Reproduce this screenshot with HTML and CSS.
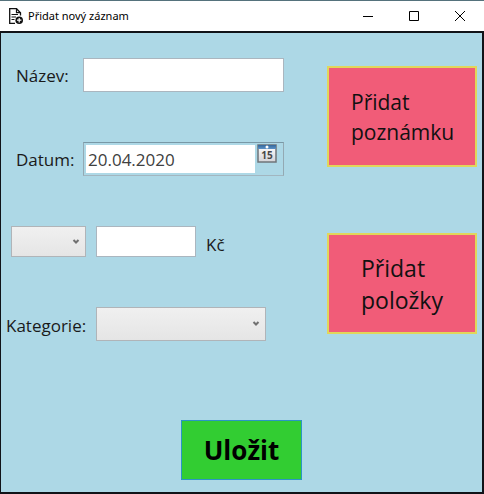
FILE: index.html
```html
<!DOCTYPE html>
<html lang="cs">
<head>
<meta charset="utf-8">
<title>Přidat nový záznam</title>
<link rel="stylesheet" href="styles.css">
</head>
<body>
<div class="window">
  <header class="titlebar">
    <svg class="app-icon" width="14" height="16" viewBox="0 0 14 16" fill="none" stroke="#111" aria-hidden="true">
      <path d="M6 15.300H.7V.7h6.800l4 4v2.800" stroke-width="1.300"/>
      <path d="M7.500.7v4h4" stroke-width="1.200"/>
      <path d="M2.500 6.500h6.500M2.500 9h4.500M2.500 11.500h3" stroke-width="1.200"/>
      <circle cx="10.200" cy="12.200" r="3.800" fill="#111" stroke="none"/>
      <path d="M10.200 10v4.400M8 12.200h4.400" stroke="#fff" stroke-width="1.200"/>
    </svg>
    <h1 class="title">Přidat nový záznam</h1>
    <div class="controls">
      <button class="control" type="button" aria-label="Minimalizovat"><svg width="10" height="10" viewBox="0 0 10 10" stroke="#000" fill="none"><path d="M0 5.500h10"/></svg></button>
      <button class="control" type="button" aria-label="Maximalizovat"><svg width="10" height="10" viewBox="0 0 10 10" stroke="#000" fill="none"><path d="M.5.5h9v9h-9z"/></svg></button>
      <button class="control" type="button" aria-label="Zavřít"><svg width="10" height="10" viewBox="0 0 10 10" stroke="#000" fill="none"><path d="M0 0l10 10M10 0L0 10"/></svg></button>
    </div>
  </header>
  <form class="content">
    <div class="columns">
      <div class="fields">
        <div class="row">
          <label class="label" for="name">Název:</label>
          <input class="box wide" id="name" type="text">
        </div>
        <div class="row">
          <label class="label" for="date">Datum:</label>
          <div class="picker wide">
            <input class="date" id="date" type="text" value="20.04.2020">
            <button class="calendar" type="button" aria-label="Vybrat datum">
              <svg width="20" height="19" viewBox="0 0 20 19" aria-hidden="true">
                <defs>
                  <linearGradient id="sheet" x2="0" y2="1"><stop offset="0" stop-color="#fff"/><stop offset="1" stop-color="#d4d4d8"/></linearGradient>
                  <linearGradient id="band" x2="0" y2="1"><stop offset="0" stop-color="#36689a"/><stop offset="1" stop-color="#5b93c8"/></linearGradient>
                </defs>
                <rect x="1" y="1" width="18" height="17" fill="url(#sheet)" stroke="#6f7479" stroke-width="1.500"/>
                <path d="M1 1h18v4H1z" fill="url(#band)"/>
                <circle cx="10" cy="3" r="1.500" fill="#fff"/>
                <text class="day" x="10" y="15" text-anchor="middle">15</text>
              </svg>
            </button>
          </div>
        </div>
        <div class="row amount">
          <span class="combo small"><select aria-label="Typ"><option></option></select>
            <svg class="arrow" width="8" height="6" viewBox="0 0 8 6" aria-hidden="true"><path d="M1.500 1L4 3.500 6.500 1"/></svg></span>
          <input class="box money" id="amount" type="text">
          <label for="amount">Kč</label>
        </div>
        <div class="row category">
          <label class="label" for="category">Kategorie:</label>
          <span class="combo"><select id="category"><option></option></select>
            <svg class="arrow" width="8" height="6" viewBox="0 0 8 6" aria-hidden="true"><path d="M1.500 1L4 3.500 6.500 1"/></svg></span>
        </div>
      </div>
      <div class="actions">
        <button class="action note" type="button">Přidat<br>poznámku</button>
        <button class="action items" type="button">Přidat<br>položky</button>
      </div>
    </div>
    <button class="save" type="submit">Uložit</button>
  </form>
</div>
</body>
</html>
```
FILE: styles.css
```css
* {
  box-sizing: border-box;
}

body {
  margin: 0;
  font-family: "Open Sans", "Noto Sans", sans-serif;
  font-size: 17px;
  line-height: 24px;
  color: #1a1a1a;
}

button,
input,
select {
  margin: 0;
  padding: 0;
  font: inherit;
  color: inherit;
}

.window {
  display: flex;
  flex-direction: column;
  min-height: 100vh;
  border-top: 1px solid #55727c;
}

.titlebar {
  display: flex;
  align-items: center;
  height: 30px;
  padding: 0 1px 0 9px;
  background: #fff;
}

.title {
  flex: 1;
  margin: 0 0 0 5px;
  font-family: "Noto Sans", sans-serif;
  font-size: 11px;
  font-weight: 400;
  line-height: 16px;
  color: #000;
}

.controls {
  display: flex;
}

.control {
  display: grid;
  place-items: center;
  width: 46px;
  height: 30px;
  border: 0;
  background: none;
}

.content {
  display: flex;
  flex: 1;
  flex-direction: column;
  justify-content: space-between;
  border: 2px solid #111318;
  border-left-width: 1px;
  padding-bottom: 12px;
  background: #add8e6;
}

.columns {
  display: flex;
  justify-content: space-between;
  padding-right: 5px;
}

.fields {
  display: flex;
  flex-direction: column;
  gap: 50px;
  padding-top: 25px;
}

.row {
  display: flex;
  align-items: center;
  height: 34px;
  padding-left: 15px;
}

.label {
  width: 67px;
  padding-top: 2px;
}

.box {
  height: 34px;
  border: 1px solid #abb6bf;
  background: #fff;
}

.wide {
  width: 201px;
}

.picker {
  display: flex;
  align-items: flex-start;
  gap: 2px;
  height: 34px;
  padding: 1px 6px 2px 2px;
  border: 1px solid;
  border-color: #7998a6 #93a9b3 #a2b6c0;
}

.date {
  flex: 1;
  min-width: 0;
  height: 28px;
  margin-top: 1px;
  padding: 0 2px;
  border: 0;
  background: #fff;
  color: #404040;
}

.calendar {
  display: block;
  width: 20px;
  height: 19px;
  border: 0;
  background: none;
}

.calendar svg {
  display: block;
}

.day {
  font: 700 10px "Open Sans", sans-serif;
  fill: #484848;
}

.amount {
  gap: 10px;
  height: 31px;
  padding-left: 10px;
}

.amount label {
  padding-top: 6px;
}

.money {
  width: 100px;
  height: 31px;
}

.category {
  padding-left: 5px;
}

.category .label {
  width: 90px;
  padding-top: 4px;
}

.combo {
  position: relative;
  width: 170px;
  height: 34px;
}

.combo select {
  display: block;
  width: 100%;
  height: 100%;
  border: 1px solid #b0b4b8;
  border-radius: 0;
  background: linear-gradient(#f0f0f0, #e5e5e5);
  appearance: none;
}

.small {
  width: 75px;
  height: 31px;
}

.arrow {
  position: absolute;
  top: calc(50% - 3px);
  right: 6px;
  fill: none;
  stroke: #707070;
  stroke-width: 2;
  pointer-events: none;
}

.action {
  width: 150px;
  height: 101px;
  border: 2px solid #e1d65a;
  background: #f15c78;
  color: #111;
  text-align: left;
}

.actions {
  display: flex;
  flex-direction: column;
  gap: 66px;
  padding-top: 33px;
}

.note {
  padding-left: 22px;
  font-size: 21px;
  line-height: 30px;
}

.items {
  padding-left: 32px;
  font-size: 23px;
  line-height: 32px;
}

.save {
  align-self: center;
  width: 121px;
  height: 60px;
  border: 1px solid #2b95c4;
  background: #32cd32;
  color: #000;
  font-size: 26px;
  font-weight: 700;
}
```
